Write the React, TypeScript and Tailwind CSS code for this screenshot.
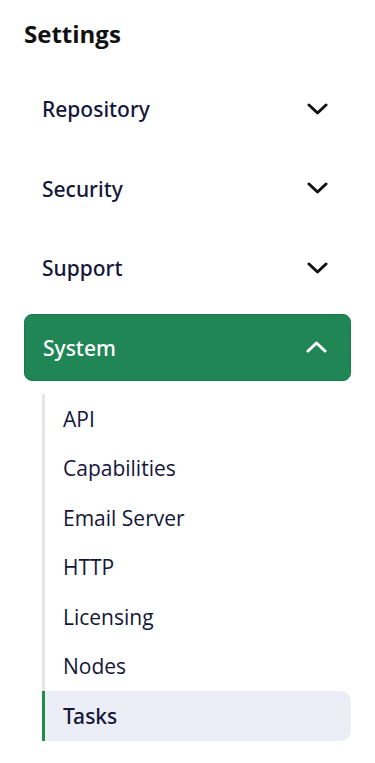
const SECTIONS = ['Repository', 'Security', 'Support'];
const SYSTEM_LINKS = ['API', 'Capabilities', 'Email Server', 'HTTP', 'Licensing', 'Nodes', 'Tasks'];

function Chevron({ up = false }: { up?: boolean }) {
  return (
    <svg width="21" height="12" viewBox="0 0 21 12" fill="none" className={up ? 'rotate-180' : ''}>
      <polyline
        points="2,2 10.5,10 19,2"
        stroke="currentColor"
        strokeWidth="3"
        strokeLinecap="round"
        strokeLinejoin="round"
      />
    </svg>
  );
}

export default function App() {
  const active = 'Tasks';

  return (
    <div
      className="min-h-screen bg-white px-6 pt-[18px] text-[#14163a]"
      style={{ fontFamily: '"Open Sans", "Noto Sans", sans-serif' }}
    >
      <h1 className="text-[24px] font-bold leading-[32px] text-[#111111]">Settings</h1>

      <nav className="mt-[26px] flex flex-col gap-[13.3px]">
        {SECTIONS.map((name) => (
          <button
            key={name}
            className="flex h-[66px] w-full items-center justify-between rounded-lg pl-[18px] pr-[23px] text-left"
          >
            <span className="pt-[2px] font-['Noto_Sans',sans-serif] text-[21px] font-medium">{name}</span>
            <span className="text-[#111111]">
              <Chevron />
            </span>
          </button>
        ))}

        {/* expanded section */}
        <div>
          <button className="flex h-[67px] w-full items-center justify-between rounded-lg border border-[#1d7a47] bg-[#208655] pl-[18px] pr-[23px] text-left text-white">
            <span className="pt-[2px] font-['Noto_Sans',sans-serif] text-[21px] font-medium">System</span>
            <Chevron up />
          </button>

          <ul className="ml-[18px] mt-[13px] border-l-[3px] border-[#e5e5e5]">
            {SYSTEM_LINKS.map((link) => {
              const isActive = link === active;
              return (
                <li
                  key={link}
                  className={
                    isActive
                      ? "-ml-[3px] flex h-[50px] items-center rounded-r-[10px] border-l-[3px] border-[#1f8a4c] bg-[#eceef7] pl-[18px] pt-[1px] font-['Noto_Sans',sans-serif] text-[21px] font-medium"
                      : 'flex h-[49.5px] items-center pl-[18px] pt-[2px] text-[21px]'
                  }
                >
                  {link}
                </li>
              );
            })}
          </ul>
        </div>
      </nav>
    </div>
  );
}
